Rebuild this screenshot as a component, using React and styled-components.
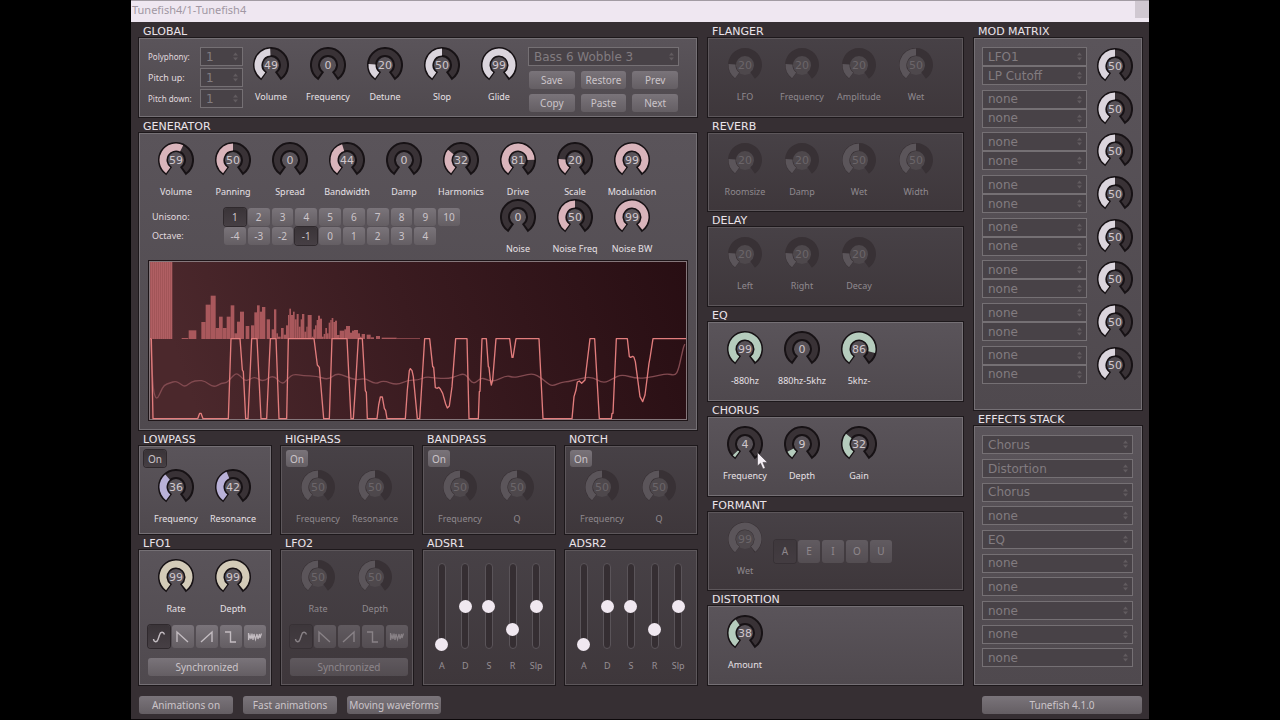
import React, { useState } from "react"
import styled, { createGlobalStyle, css } from "styled-components"

const GlobalStyle = createGlobalStyle`
    * {
        box-sizing: border-box;
    }

    body {
        margin: 0;
        background: #000;
        color: #e0dadf;
        font-family: "Noto Sans", sans-serif;
        font-size: 9px;
        line-height: 12px;
    }

    button, select, input {
        margin: 0;
        font: inherit;
    }
`;

// Window

const Window = styled.div`
    max-width: 1018px;
    min-height: 100vh;
    margin: 0 auto;
    background: #362f33;
    border-bottom: 1px solid #0c080a;
`;

const TitleBar = styled.header`
    display: flex;
    justify-content: space-between;
    height: 22px;
    padding-left: 1px;
    border-top: 1px solid #a29ba3;
    background: #efe7f1;
    color: #a197a3;
    font-size: 11px;
    line-height: 18px;
`;

const CloseButton = styled.button`
    width: 14px;
    height: 17px;
    padding: 0;
    border: 0;
    background: #d0c8d1;
`;

const Columns = styled.main`
    display: grid;
    grid-template-columns: 558fr 255fr 168fr;
    gap: 11px;
    padding: 0 7px 0 8px;
`;

const Column = styled.div`
    display: flex;
    flex-direction: column;
    min-width: 0;
`;

const Quarters = styled.div`
    display: grid;
    grid-template-columns: repeat(4, 1fr);
    gap: 10px;
`;

const Footer = styled.footer`
    display: flex;
    gap: 10px;
    padding: 11px 7px 4px 8px;
`;

// Sections

const SectionBox = styled.section`
    display: flex;
    flex-direction: column;
    flex: ${props => props.$grow ? `${props.$grow} 1 0` : "none"};
    min-width: 0;
`;

const SectionTitle = styled.h2`
    height: 16px;
    margin: 0;
    padding-left: 4px;
    color: #ebe4ea;
    font: 11px/19px "DejaVu Sans", sans-serif;
    white-space: nowrap;
`;

const Panel = styled.div`
    flex: 1;
    padding: ${props => props.$pad || "8px 4px 4px 8px"};
    border: 1px solid ${props => props.$dim ? "#5d575b" : "#757075"};
    box-shadow: 0 0 0 1px #1d181b;
    background: ${props => props.$dim
        ? "linear-gradient(#474146, #3e373b)"
        : "linear-gradient(#5a545a, #4f494e)"};
`;

const Row = styled.div`
    display: flex;
`;

// Knobs

const KnobCell = styled.div`
    position: relative;
    display: flex;
    flex-direction: column;
    align-items: center;
    width: 57px;
    padding-right: 1px;
`;

const Dial = styled.div`
    position: relative;
    width: 36px;
    height: 36px;
`;

const DialInput = styled.input`
    position: absolute;
    inset: 0;
    width: 100%;
    height: 100%;
    opacity: 0;
`;

const DialText = styled.text`
    font: 11px "DejaVu Sans", sans-serif;
    text-anchor: middle;
    fill: ${props => props.$dim ? "#6b6569" : "#cfc7cc"};
`;

const KnobLabel = styled.label`
    margin-top: 8px;
    color: ${props => props.$dim ? "#8f898e" : "#e6e0e5"};
    white-space: nowrap;
`;

const Pointer = styled.svg`
    position: absolute;
    left: 40px;
    top: 26px;
    pointer-events: none;
`;

// Buttons

const pressed = css`
    background: linear-gradient(#3a3438, #463f44);
    box-shadow: 0 0 0 1px #2f292d;
`;

const Button = styled.button`
    display: flex;
    align-items: center;
    justify-content: center;
    min-width: 0;
    width: ${props => props.$width || "auto"};
    height: ${props => props.$height || "18px"};
    padding: 0;
    border: 0;
    border-radius: 3px;
    background: linear-gradient(#7a747a, #645e63);
    color: #cbc4c9;
    font-size: 10px;
    line-height: 16px;
    white-space: nowrap;
    opacity: ${props => props.$dim ? 0.55 : 1};
    ${props => props.$on && pressed}
`;

const VersionButton = styled(Button)`
    margin-left: auto;
`;

const ButtonGrid = styled.div`
    display: grid;
    grid-template-columns: repeat(${props => props.$columns}, 1fr);
    gap: 2px;
    width: ${props => props.$columns === 10 ? "236px" : "118px"};
`;

const WaveBlock = styled.div`
    display: flex;
    flex-direction: column;
    gap: 10px;
    width: 118px;
    padding: 10px 0 4px;
`;

const VowelBlock = styled.div`
    padding-top: 19px;
`;

// Drop-downs

const SelectBox = styled.div`
    position: relative;
    width: ${props => props.$width || "auto"};
    height: 19px;
`;

const SelectField = styled.select`
    display: block;
    width: 100%;
    height: 100%;
    padding: 0 16px 0 5px;
    appearance: none;
    border: 1px solid #757074;
    border-radius: 0;
    background: #484247;
    color: #827c80;
    font: 12px "DejaVu Sans", sans-serif;
`;

const Arrows = styled.svg`
    position: absolute;
    right: 5px;
    top: 5px;
    pointer-events: none;
    fill: #625c60;
`;

// Global

const Voices = styled.div`
    display: grid;
    grid-template-columns: 52px 43px;
    gap: 2px 0;
    align-content: start;
    align-items: center;
`;

const VoiceLabel = styled.label`
    color: #e0dadf;
    font-size: ${props => props.$small ? "8px" : "9px"};
`;

const Presets = styled.div`
    display: flex;
    flex-direction: column;
    gap: 5px;
    width: 151px;
`;

const PresetButtons = styled.div`
    display: grid;
    grid-template-columns: repeat(3, 1fr);
    gap: 5px 6px;
    padding: 0 1px;
`;

// Generator

const Voicing = styled.div`
    display: grid;
    grid-template-columns: 72px 1fr;
    gap: 1px 0;
    align-content: start;
    align-items: center;
    width: 342px;
    padding: 9px 0 0 4px;
    color: #e0dadf;
`;

const SecondRow = styled(Row)`
    margin: 1px 0 5px;
`;

const Scope = styled.svg`
    display: block;
    width: 100%;
    height: 161px;
`;

// Filters and envelopes

const FilterKnobs = styled(Row)`
    padding: 2px 0 4px 4px;
`;

const Faders = styled.div`
    display: grid;
    grid-template-columns: repeat(5, 1fr);
    width: 118px;
`;

const Fader = styled.div`
    display: flex;
    flex-direction: column;
    align-items: center;
    gap: 11px;
    color: #968f94;
`;

const Groove = styled.div`
    display: flex;
    justify-content: center;
    width: 8px;
    height: 86px;
    border: 1px solid #5a5459;
    border-radius: 4px;
    background: #352e32;
`;

const FaderInput = styled.input`
    flex: none;
    width: 13px;
    height: 90px;
    margin: -3px 0;
    appearance: none;
    background: transparent;
    writing-mode: vertical-lr;
    direction: rtl;

    &::-webkit-slider-thumb {
        width: 13px;
        height: 13px;
        appearance: none;
        border-radius: 50%;
        background: #f0e8f0;
    }
`;

// Right column

const MatrixRows = styled.div`
    display: grid;
    grid-template-rows: repeat(8, 1fr);
    height: 100%;
`;

const MatrixRow = styled.div`
    display: grid;
    grid-template-columns: 1fr 36px;
    gap: 10px;
    align-items: start;
`;

const MatrixKnob = styled.div`
    padding-top: 1px;
`;

const StackRows = styled.div`
    display: grid;
    grid-template-rows: repeat(10, 1fr);
    height: 100%;
`;

const WHITE = "#dbd5dd";
const PINK = "#d9b4bb";
const VIOLET = "#b9b1d8";
const CREAM = "#d3cbb8";
const GREEN = "#b5ccbd";

// The dial runs clockwise from -144 to 144 degrees, 0 is straight up
const polar = (radius, degrees) => {
    const a = degrees * Math.PI / 180
    return `${(18 + radius * Math.sin(a)).toFixed(2)},${(18 - radius * Math.cos(a)).toFixed(2)}`
}

const ring = (from, to, outer, inner) => {
    const large = to - from > 180 ? 1 : 0
    return `M${polar(outer, from)} A${outer},${outer} 0 ${large} 1 ${polar(outer, to)} ` +
        `L${polar(inner, to)} A${inner},${inner} 0 ${large} 0 ${polar(inner, from)} Z`
}

const KnobDial = ({ id, name, start, color, dim }) => {
    const [value, setValue] = useState(start)
    const end = -144 + value / 100 * 288
    return (
        <Dial>
            <svg width="36" height="36" viewBox="0 0 36 36">
                {dim && <circle cx="18" cy="18" r="10" fill="#4e484c" />}
                <path
                    d={ring(-144, 144, 17, 9)}
                    fill={dim ? "#383135" : "#393236"}
                    stroke={dim ? "none" : "#171215"}
                    strokeWidth="2"
                />
                {value > 0 && <path d={ring(-143, end, 16.5, 9.5)} fill={dim ? "#5b555a" : color} />}
                <DialText x="18" y="22" $dim={dim}>{value}</DialText>
            </svg>
            <DialInput
                id={id}
                type="range"
                min="0"
                max="99"
                value={value}
                disabled={dim}
                aria-label={name}
                onChange={e => setValue(Number(e.target.value))}
            />
        </Dial>
    )
}

const Knob = ({ group, name, value, color, dim, children }) => {
    const id = `${group}-${name}`.replace(/\s/g, "-")
    return (
        <KnobCell>
            <KnobDial id={id} name={name} start={value} color={color} dim={dim} />
            <KnobLabel htmlFor={id} $dim={dim}>{name}</KnobLabel>
            {children}
        </KnobCell>
    )
}

const Knobs = ({ group, items, color, dim }) => items.map(([name, value]) => (
    <Knob key={name} group={group} name={name} value={value} color={color} dim={dim} />
))

const Section = ({ title, dim, pad, grow, children }) => (
    <SectionBox $grow={grow}>
        <SectionTitle>{title}</SectionTitle>
        <Panel $dim={dim} $pad={pad}>{children}</Panel>
    </SectionBox>
)

const Select = ({ id, name, value, options, width }) => (
    <SelectBox $width={width}>
        <SelectField id={id} aria-label={name} defaultValue={value}>
            {options.map(option => <option key={option}>{option}</option>)}
        </SelectField>
        <Arrows width="5" height="9" viewBox="0 0 5 9">
            <path d="M0 3.5 2.5 0.5 5 3.5ZM0 5.5 2.5 8.5 5 5.5Z" />
        </Arrows>
    </SelectBox>
)

const Choice = ({ name, items, start, columns, height, dim }) => {
    const [current, setCurrent] = useState(start)
    return (
        <ButtonGrid $columns={columns} role="group" aria-label={name}>
            {items.map(item => {
                const key = item.name || item
                return (
                    <Button
                        key={key}
                        type="button"
                        $on={key === current}
                        $dim={dim}
                        $height={height}
                        disabled={dim}
                        aria-label={key}
                        aria-pressed={key === current}
                        onClick={() => setCurrent(key)}
                    >
                        {item.icon || item}
                    </Button>
                )
            })}
        </ButtonGrid>
    )
}

const WaveIcon = ({ d, width = 1.4 }) => (
    <svg width="22" height="22" viewBox="0 0 22 22" fill="none" stroke="#c3bcc1" strokeWidth={width}>
        <path d={d} />
    </svg>
)

const waves = [
    { name: "Sine", icon: <WaveIcon d="M5.5 13C6 16.5 9 16.5 10 13.5L11.5 9C12.5 5.5 15.5 5.5 16.5 8.5" /> },
    { name: "Saw down", icon: <WaveIcon d="M5 16V6L16 16" /> },
    { name: "Saw up", icon: <WaveIcon d="M5 16 16 6V16" /> },
    { name: "Pulse", icon: <WaveIcon d="M5 6H10.5V16H16" /> },
    { name: "Noise", icon: <WaveIcon width={1.2} d="M4.5 7V14L6 9 7 13 8 7.5 9 14 10 8 11.5 13.5 13 8 14 13 15.5 8 16 12 17.5 7.5" /> }
];

const Lfo = ({ title, value, dim }) => (
    <Section title={title} dim={dim}>
        <Row>
            <Knobs group={title} items={[["Rate", value], ["Depth", value]]} color={CREAM} dim={dim} />
        </Row>
        <WaveBlock>
            <Choice name="Wave" items={waves} start="Sine" columns={5} height="23px" dim={dim} />
            <Button type="button" $dim={dim} disabled={dim}>Synchronized</Button>
        </WaveBlock>
    </Section>
)

const Filter = ({ title, second, values, dim }) => {
    const [on, setOn] = useState(!dim)
    return (
        <Section title={title} dim={dim} pad="3px 4px 4px">
            <Button type="button" $width="22px" $height="17px" $on={on} onClick={() => setOn(!on)}>On</Button>
            <FilterKnobs>
                <Knobs
                    group={title}
                    items={[["Frequency", values[0]], [second, values[1]]]}
                    color={VIOLET}
                    dim={dim}
                />
            </FilterKnobs>
        </Section>
    )
}

const Adsr = ({ title }) => (
    <Section title={title} dim pad="12px 0 0 6px">
        <Faders>
            {[["A", 0], ["D", 50], ["S", 50], ["R", 20], ["Slp", 50]].map(([name, value]) => (
                <Fader key={name}>
                    <Groove>
                        <FaderInput id={`${title}-${name}`} type="range" defaultValue={value} />
                    </Groove>
                    <label htmlFor={`${title}-${name}`}>{name}</label>
                </Fader>
            ))}
        </Faders>
    </Section>
)

// x, width, top of each partial in the spectrum
const bars = [
    [155, 20, 414], [176, 23, 391], [214, 13, 366], [227, 15, 314], [242, 15, 287], [257, 10, 384],
    [267, 11, 350], [278, 12, 384], [290, 12, 350], [302, 11, 316], [313, 8, 400], [321, 9, 365],
    [330, 12, 335], [347, 11, 378], [363, 10, 376], [373, 8, 337], [381, 8, 316], [389, 7, 335],
    [396, 10, 321], [410, 10, 358], [425, 7, 388], [432, 7, 328], [439, 5, 400], [444, 8, 410],
    [453, 8, 384], [461, 7, 404], [468, 6, 376], [474, 4, 345], [478, 5, 326], [483, 6, 345],
    [489, 5, 335], [494, 6, 358], [500, 6, 342], [506, 6, 380], [512, 4, 358], [516, 7, 342],
    [523, 6, 395], [529, 4, 380], [533, 12, 345], [545, 5, 410], [550, 5, 388], [555, 5, 376],
    [560, 4, 360], [564, 6, 347], [570, 6, 356], [576, 5, 410], [581, 5, 402], [586, 5, 384],
    [591, 5, 400], [596, 5, 368], [601, 4, 360], [605, 5, 354], [610, 5, 366], [615, 6, 362],
    [621, 8, 405], [629, 14, 392], [643, 5, 388], [648, 12, 378], [660, 6, 398], [666, 6, 392],
    [672, 12, 390], [684, 6, 400], [690, 5, 410], [695, 10, 402], [710, 12, 404], [722, 10, 412],
    [738, 12, 408], [755, 45, 413], [800, 70, 415]
];

const wave = "60,416 64,418 69,656 203,656 209,640 213,640 219,656 295,656 303,416 330,416 337,510 340,515 " +
    "347,656 354,656 365,416 381,416 393,656 410,656 421,416 438,416 447,656 470,656 475,416 552,416 562,495 " +
    "568,502 581,656 598,656 606,416 651,416 663,656 670,656 678,535 685,416 697,416 706,572 709,577 712,656 " +
    "741,656 746,615 751,591 757,591 763,625 767,632 771,656 826,656 832,570 838,512 841,506 846,512 850,530 " +
    "862,656 869,656 884,416 899,416 908,500 911,502 916,563 922,565 926,562 931,567 938,580 947,612 952,624 " +
    "958,618 966,560 977,416 1011,416 1017,656 1045,656 1048,575 1050,574 1056,416 1069,416 1075,500 1077,502 " +
    "1081,540 1084,555 1088,540 1098,416 1139,416 1146,472 1149,472 1158,416 1227,416 1239,656 1326,656 " +
    "1332,590 1338,570 1342,546 1348,543 1355,550 1365,540 1380,416 1394,416 1408,656 1444,656 1446,640 " +
    "1449,640 1459,416 1492,416 1498,470 1502,472 1508,469 1512,472 1516,485 1530,590 1538,605 1545,585 " +
    "1557,490 1560,474 1569,416 1668,416";

const drift = [
    [62, 420], [68, 560], [76, 594], [84, 594], [92, 575], [102, 555], [120, 549], [137, 543], [152, 552],
    [165, 561], [185, 545], [205, 541], [225, 543], [250, 563], [275, 549], [290, 549], [302, 535], [318, 519],
    [330, 527], [345, 543], [360, 538], [375, 530], [400, 546], [430, 524], [457, 555], [474, 535], [490, 522],
    [520, 527], [560, 528], [595, 540], [620, 519], [650, 530], [680, 541], [705, 534], [735, 553], [760, 541],
    [800, 556], [835, 540], [862, 541], [890, 530], [910, 534], [955, 536], [978, 529], [998, 521], [1010, 527],
    [1030, 554], [1052, 534], [1066, 537], [1090, 546], [1130, 526], [1150, 533], [1175, 528], [1210, 520],
    [1235, 535], [1250, 548], [1267, 559], [1295, 546], [1315, 545], [1340, 538], [1385, 529], [1420, 551],
    [1450, 535], [1475, 523], [1520, 536], [1570, 531], [1610, 520], [1635, 527], [1645, 510], [1655, 465],
    [1662, 435], [1668, 430]
];

// Rounds a list of points off by curving through the midpoints
const smooth = points => points.slice(1, -1).reduce((path, [x, y], i) => {
    const next = points[i + 2]
    return `${path} Q${x},${y} ${(x + next[0]) / 2},${(y + next[1]) / 2}`
}, `M${points[0]}`)

const ScopeView = () => (
    <Scope viewBox="54 180 1620 483" preserveAspectRatio="none">
        <defs>
            <linearGradient id="scope" x1="0" y1="0.1" x2="1" y2="0">
                <stop offset="0" stopColor="#4b282c" />
                <stop offset="0.45" stopColor="#3a1b20" />
                <stop offset="1" stopColor="#280e13" />
            </linearGradient>
            <pattern id="stripes" width="6" height="6" patternUnits="userSpaceOnUse">
                <rect width="6" height="6" fill="#b05f63" />
                <rect width="2" height="6" fill="#9b4f53" />
            </pattern>
        </defs>
        <rect x="54" y="180" width="1620" height="483" fill="#1e1518" />
        <rect x="57" y="183" width="1614" height="477" fill="#85777b" />
        <rect x="60" y="186" width="1608" height="471" fill="url(#scope)" />
        <rect x="60" y="186" width="67" height="231" fill="url(#stripes)" />
        {bars.map(([x, width, top]) => (
            <rect key={x} x={x} y={top} width={width} height={417 - top} fill="#a9585c" />
        ))}
        <path d={smooth(drift)} fill="none" stroke="#824a50" strokeWidth="4" />
        <polyline points={wave} fill="none" stroke="#e27d7d" strokeWidth="4" strokeLinejoin="round" />
    </Scope>
)

const sources = ["none", "LFO1", "LFO2", "ADSR1", "ADSR2"];
const targets = ["none", "LP Cutoff", "HP Cutoff", "BP Cutoff", "Volume", "Panning"];
const effects = ["none", "Distortion", "Chorus", "Delay", "Reverb", "Flanger", "Formant", "EQ"];
const numbers = ["1", "2", "3", "4", "5", "6", "7", "8"];

const matrix = [["LFO1", "LP Cutoff"], ...Array(7).fill(["none", "none"])];
const stack = ["Chorus", "Distortion", "Chorus", "none", "EQ", "none", "none", "none", "none", "none"];

const Global = () => (
    <Section title="GLOBAL">
        <Row>
            <Voices>
                {["Polyphony:", "Pitch up:", "Pitch down:"].map(name => (
                    <React.Fragment key={name}>
                        <VoiceLabel htmlFor={name} $small={name !== "Pitch up:"}>{name}</VoiceLabel>
                        <Select id={name} value="1" options={numbers} />
                    </React.Fragment>
                ))}
            </Voices>
            <Knobs
                group="global"
                items={[["Volume", 49], ["Frequency", 0], ["Detune", 20], ["Slop", 50], ["Glide", 99]]}
                color={WHITE}
            />
            <Presets>
                <Select name="Preset" value="Bass 6 Wobble 3" options={["Bass 6 Wobble 3"]} />
                <PresetButtons>
                    {["Save", "Restore", "Prev", "Copy", "Paste", "Next"].map(name => (
                        <Button key={name} type="button">{name}</Button>
                    ))}
                </PresetButtons>
            </Presets>
        </Row>
    </Section>
)

const Generator = () => (
    <Section title="GENERATOR" pad="8px">
        <Row>
            <Knobs
                group="generator"
                items={[
                    ["Volume", 59], ["Panning", 50], ["Spread", 0], ["Bandwidth", 44], ["Damp", 0],
                    ["Harmonics", 32], ["Drive", 81], ["Scale", 20], ["Modulation", 99]
                ]}
                color={PINK}
            />
        </Row>
        <SecondRow>
            <Voicing>
                <span>Unisono:</span>
                <Choice
                    name="Unisono"
                    items={["1", "2", "3", "4", "5", "6", "7", "8", "9", "10"]}
                    start="1"
                    columns={10}
                />
                <span>Octave:</span>
                <Choice
                    name="Octave"
                    items={["-4", "-3", "-2", "-1", "0", "1", "2", "3", "4"]}
                    start="-1"
                    columns={10}
                />
            </Voicing>
            <Knobs
                group="generator"
                items={[["Noise", 0], ["Noise Freq", 50], ["Noise BW", 99]]}
                color={PINK}
            />
        </SecondRow>
        <ScopeView />
    </Section>
)

const Effect = ({ title, items, dim, children }) => (
    <Section title={title} dim={dim} grow={1}>
        <Row>
            <Knobs group={title} items={items} color={GREEN} dim={dim} />
            {children}
        </Row>
    </Section>
)

const Chorus = () => (
    <Section title="CHORUS" grow={1}>
        <Row>
            <Knob group="chorus" name="Frequency" value={4} color={GREEN}>
                <Pointer width="12" height="18" viewBox="0 0 12 18">
                    <path
                        d="M0.5 0.5V14L3.5 11.2 6 17 8.3 16 5.9 10.4H10.5Z"
                        fill="#f4eef4"
                        stroke="#3a3438"
                        strokeWidth="0.5"
                    />
                </Pointer>
            </Knob>
            <Knobs group="chorus" items={[["Depth", 9], ["Gain", 32]]} color={GREEN} />
        </Row>
    </Section>
)

export default function App() {
    return (
        <>
            <GlobalStyle />
            <Window>
                <TitleBar>
                    <span>Tunefish4/1-Tunefish4</span>
                    <CloseButton type="button" aria-label="Close" />
                </TitleBar>
                <Columns>
                    <Column>
                        <Global />
                        <Generator />
                        <Quarters>
                            <Filter title="LOWPASS" second="Resonance" values={[36, 42]} />
                            <Filter title="HIGHPASS" second="Resonance" values={[50, 50]} dim />
                            <Filter title="BANDPASS" second="Q" values={[50, 50]} dim />
                            <Filter title="NOTCH" second="Q" values={[50, 50]} dim />
                        </Quarters>
                        <Quarters>
                            <Lfo title="LFO1" value={99} />
                            <Lfo title="LFO2" value={50} dim />
                            <Adsr title="ADSR1" />
                            <Adsr title="ADSR2" />
                        </Quarters>
                    </Column>
                    <Column>
                        <Effect
                            title="FLANGER"
                            items={[["LFO", 20], ["Frequency", 20], ["Amplitude", 20], ["Wet", 50]]}
                            dim
                        />
                        <Effect
                            title="REVERB"
                            items={[["Roomsize", 20], ["Damp", 20], ["Wet", 50], ["Width", 50]]}
                            dim
                        />
                        <Effect title="DELAY" items={[["Left", 20], ["Right", 20], ["Decay", 20]]} dim />
                        <Effect title="EQ" items={[["-880hz", 99], ["880hz-5khz", 0], ["5khz-", 86]]} />
                        <Chorus />
                        <Effect title="FORMANT" items={[["Wet", 99]]} dim>
                            <VowelBlock>
                                <Choice
                                    name="Vowel"
                                    items={["A", "E", "I", "O", "U"]}
                                    start="A"
                                    columns={5}
                                    height="23px"
                                    dim
                                />
                            </VowelBlock>
                        </Effect>
                        <Effect title="DISTORTION" items={[["Amount", 38]]} />
                    </Column>
                    <Column>
                        <Section title="MOD MATRIX" grow={389} pad="8px 8px 21px 7px">
                            <MatrixRows>
                                {matrix.map(([source, target], i) => (
                                    <MatrixRow key={i}>
                                        <div>
                                            <Select name={`Source ${i + 1}`} value={source} options={sources} />
                                            <Select name={`Target ${i + 1}`} value={target} options={targets} />
                                        </div>
                                        <MatrixKnob>
                                            <KnobDial name={`Amount ${i + 1}`} start={50} color={WHITE} />
                                        </MatrixKnob>
                                    </MatrixRow>
                                ))}
                            </MatrixRows>
                        </Section>
                        <Section title="EFFECTS STACK" grow={275} pad="8px 8px 12px 7px">
                            <StackRows>
                                {stack.map((effect, i) => (
                                    <Select key={i} name={`Effect ${i + 1}`} value={effect} options={effects} />
                                ))}
                            </StackRows>
                        </Section>
                    </Column>
                </Columns>
                <Footer>
                    <Button type="button" $width="94px">Animations on</Button>
                    <Button type="button" $width="94px">Fast animations</Button>
                    <Button type="button" $width="94px">Moving waveforms</Button>
                    <VersionButton type="button" $width="160px">Tunefish 4.1.0</VersionButton>
                </Footer>
            </Window>
        </>
    )
}
